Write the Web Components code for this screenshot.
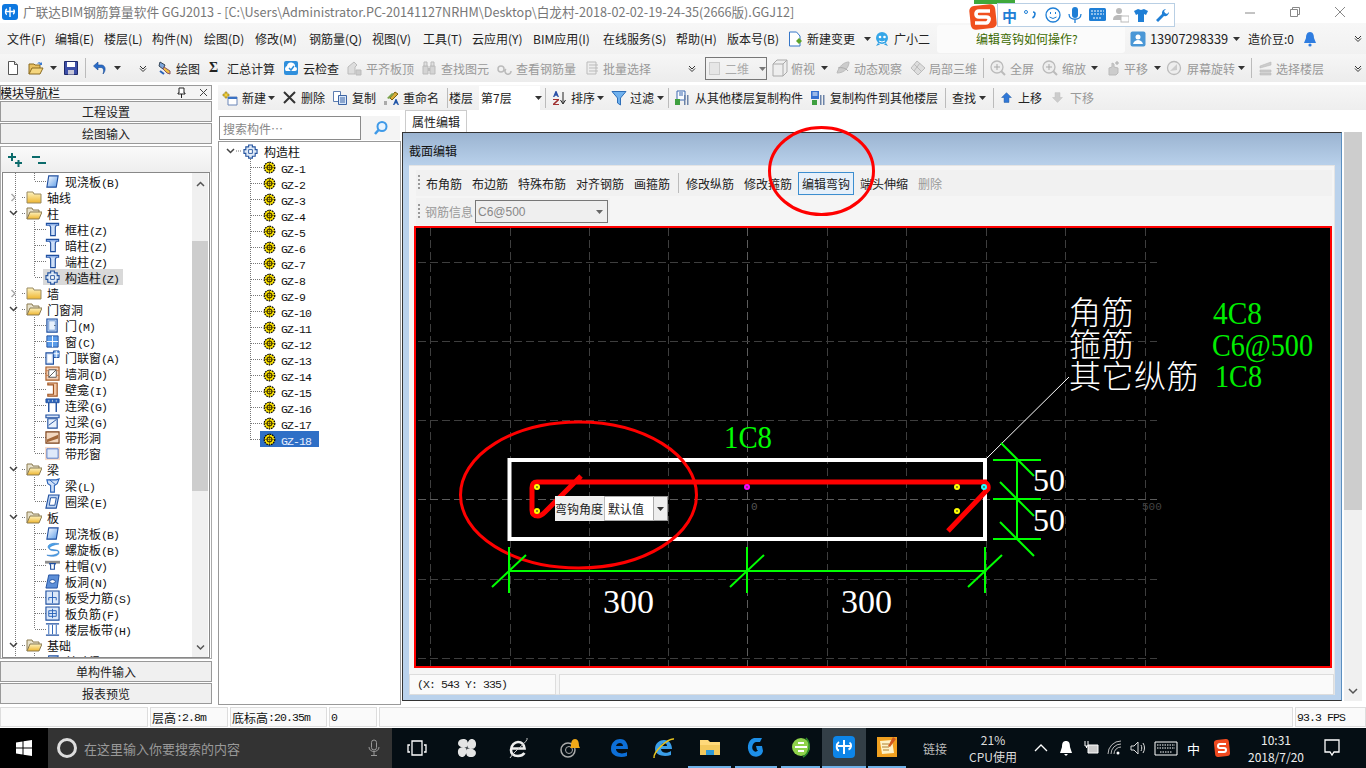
<!DOCTYPE html>
<html lang="zh"><head><meta charset="utf-8"><title>GGJ2013</title>
<style>
html,body{margin:0;padding:0;width:1366px;height:768px;overflow:hidden;background:#fff;font:12px "Noto Sans CJK SC","Noto Sans",sans-serif;color:#111}
gg-app{display:flex;flex-direction:column;width:1366px;height:768px;position:relative}
</style></head><body>
<gg-app>
<gg-titlebar></gg-titlebar>
<gg-strip row="menu" style="height:31px;background:linear-gradient(#f7f7f7,#f1f1f1)"></gg-strip>
<gg-strip row="tools" style="height:28px;background:linear-gradient(#f6f6f6,#ececec)"></gg-strip>
<gg-main></gg-main>
<gg-status></gg-status>
<gg-taskbar></gg-taskbar>
<gg-annot></gg-annot>
<gg-ime></gg-ime>
</gg-app>
<script>
const I={
doc:'<path d="M3.5 1.5h6l3 3v10h-9z" fill="#fff" stroke="#555"/><path d="M9.5 1.5v3h3" fill="#e4e4e4" stroke="#555"/>',
open:'<path d="M1 14V4h5l1 1h5v3" fill="#e8c060" stroke="#8a6a20"/><path d="M1 14l3-6h11l-3 6z" fill="#f5d67e" stroke="#8a6a20"/><path d="M9 4c1-2 3-2 4-1l1-1v3h-3l1-1c-1-.6-2-.4-3 0z" fill="#3a7ad0"/>',
save:'<path d="M1.5 1.5h13v13h-13z" fill="#3d4fa8" stroke="#1f2a6a"/><path d="M4 2h8v5H4z" fill="#fff"/><path d="M5 10h6v4.500H5z" fill="#c8c8d8"/>',
undo:'<path d="M11 14c3-3 3-8-1-9H6V2L1.500 6 6 10V7.500h3c3 0 3 4 2 6.500z" fill="#2a6cc8" stroke="#174a94" stroke-width=".6"/>',
draw:'<path d="M3 2l5 3-2 4-4-3z" fill="#7ea6dc" stroke="#345"/><path d="M7 7l6 4v3l-3-1-4-4z" fill="#f0c040" stroke="#856"/><path d="M3 11l4 3" stroke="#2a62b8" stroke-width="2"/>',
cloud:'<rect x="1" y="1" width="14" height="14" rx="2" fill="#2f8fdc"/><path d="M3 11a3 3 0 0 1 1-5 4 4 0 0 1 8 1 2 2 0 0 1 0 4z" fill="#fff"/><path d="M6 8l2 2 3-4" fill="none" stroke="#2f8fdc" stroke-width="1.500"/>',
gflat:'<path d="M2 14V7l6-5 3 3-2 2v7z" fill="#ddd" stroke="#bbb"/><path d="M10 10h5v5h-5z" fill="#ccc" stroke="#bbb"/>',
gfind:'<path d="M2 6h5v8H2zM9 6h5v8H9z" fill="#d4d4d4" stroke="#bbb"/><path d="M3 2h3v4H3zM10 2h3v4h-3z" fill="#e0e0e0" stroke="#bbb"/><path d="M7 8h2v3H7z" fill="#bbb"/>',
gview:'<path d="M1 9a3 3 0 1 0 6 0 3 3 0 0 0-6 0zM9 9a3 3 0 1 0 5 2" fill="none" stroke="#bbb" stroke-width="1.500"/>',
gbatch:'<path d="M2 2h9v12H2z" fill="#eee" stroke="#bbb"/><path d="M4 5h9M4 8h9M4 11h9" stroke="#bbb"/>',
gbox:'<path d="M3 6l4-4h10v12l-4 4H3z" fill="#eee" stroke="#aaa"/><path d="M3 6h10v12M13 6l4-4" fill="none" stroke="#aaa"/>',
gorbit:'<path d="M2 13C4 6 9 2 14 2c0 5-4 11-12 11z" fill="#ccc" stroke="#bbb"/><path d="M3 8c3-1 8 0 10 3" fill="none" stroke="#aaa"/>',
glocal:'<path d="M7 1l8 7-7 7-7-7z" fill="#ddd" stroke="#bbb"/><path d="M4 4l8 8M10 3l-6 8" stroke="#bbb"/>',
gzoom:'<circle cx="7" cy="7" r="6" fill="#eee" stroke="#bbb" stroke-width="1.300"/><path d="M11 11l4 4" stroke="#bbb" stroke-width="2"/><path d="M4 7h6M7 4v6" stroke="#aaa"/>',
gpan:'<path d="M4 15V8l3-1V3l2 1v3l4 1v5l-2 2z" fill="#ccc" stroke="#bbb"/><path d="M12 1v4M10 3h4" stroke="#aaa"/>',
grot:'<circle cx="8" cy="8" r="6.500" fill="#eee" stroke="#bbb" stroke-width="1.300"/><path d="M4 11l7-7v6z" fill="#ccc"/>',
gfloor:'<path d="M2 6l11-4v3L2 8zM2 10h11v2H2zM2 13h11v2H2z" fill="#ccc" stroke="#bbb" stroke-width=".6"/>',
newp:'<path d="M6 7h9v8H6z" fill="#fff" stroke="#6b86b8"/><path d="M6 7h9v2H6z" fill="#3a72c4"/><path d="M1 4h2V2h2v2h2v2H5v2H3V6H1z" fill="#f3cf3c" stroke="#8a7514" stroke-width=".6"/>',
copy:'<path d="M1.500 1.500h7v10h-7z" fill="#fff" stroke="#5c7db0"/><path d="M6.500 5.500h8v9h-8z" fill="#d8e6f8" stroke="#3c64a4"/><path d="M8 8h5M8 10h5M8 12h5" stroke="#3c64a4"/>',
ren:'<path d="M7 8l5-6 3 2-6 6z" fill="#d9ad3a" stroke="#7a6010"/><path d="M4 8l5-5 2 1-5 5z" fill="#7da34c"/><path d="M1 11h3v4H1z" fill="#aaa"/><path d="M10 15l2.500-6h1L16 15h-1.500l-.5-1.500h-2L11.500 15z" fill="#2256a8"/>',
sort:'<path d="M12 2v11M9.500 10l2.500 4 2.500-4" fill="none" stroke="#222"/><path d="M2 7l2.500-6h1L8 7H6.500l-.4-1.200H3.900L3.500 7z" fill="#2c52a8"/><path d="M2 9h6v1.200L4 14h4v1H2v-1.200L6 10H2z" fill="#a03232"/>',
filter:'<path d="M1 1.500h14L9.500 8v7l-3-2V8z" fill="#6fb1ee" stroke="#2f6fb8"/>',
cf:'<path d="M3 1h8v9H3z" fill="#f8fbff" stroke="#3a68b0"/><path d="M1 9h5v6H1z" fill="#3fa040"/><path d="M10 5h1.500v10H10zM13 5h1.500v10H13z" fill="#6c83a8"/><path d="M5 3h4M5 5h4" stroke="#3a68b0"/>',
cg:'<path d="M1 1h8v8H1z" fill="#3570d0"/><path d="M2.500 3h5M2.500 5h5" stroke="#fff"/><path d="M2 10h5v5H2z" fill="#3fa040"/><path d="M10 5h1.500v10H10zM13 5h1.500v10H13z" fill="#6c83a8"/>',
up:'<path d="M8 2l6 6h-3v6H5V8H2z" fill="#2f78d8" stroke="#1d569c" stroke-width=".6"/>',
gdown:'<path d="M5 2h6v6h3l-6 6-6-6h3z" fill="#ccc" stroke="#bbb" stroke-width=".6"/>',
newchg:'<path d="M2.500 1h7l3.500 4v10h-10.500z" fill="#fff" stroke="#3576c8"/><path d="M9 10l3-3 3 3-3 3z" fill="#5da42a"/>',
xiao:'<circle cx="8" cy="7" r="6" fill="#35a6e8"/><circle cx="6" cy="6" r="1.300" fill="#fff"/><circle cx="10.500" cy="6" r="1.300" fill="#fff"/><path d="M5 10q3 2 6 0" stroke="#fff" fill="none"/><path d="M4 12l-2 3 4-1.500M12 12l2 3-4-1.500" fill="#2f9ce0"/>',
avatar:'<rect x=".5" y=".5" width="15" height="15" rx="2" fill="#4a97d6"/><circle cx="8" cy="6" r="2.500" fill="#fff"/><path d="M3 13c1-3 3-4 5-4s4 1 5 4z" fill="#fff"/>',
bell:'<path d="M8 1c3 0 4 3 4 6l2 5H2l2-5c0-3 1-6 4-6z" fill="#2f7de0"/><circle cx="8" cy="14" r="1.600" fill="#2f7de0"/>',
slab:'<path d="M4 2h10l-2 12H2z" fill="url(#bg)" stroke="#1f4f9f" stroke-width="1.200"/>',
col:'<path d="M1.500 1.500h13v2h-2.500l-1 2v9H6v-9l-1-2H1.500z" fill="#cfe0f8" stroke="#1f4f9f" stroke-width="1.200"/><path d="M2 3h12" stroke="#6f9be0"/>',
gz:'<path d="M6 1h4v2h3v3h2v4h-2v3h-3v2H6v-2H3v-3H1V6h2V3h3z" fill="#dfeaf8" stroke="#27559f" stroke-width="1.200"/><path d="M6 6h4v4H6z" fill="#fff" stroke="#27559f"/>',
door:'<path d="M2 1h11v14H2z" fill="#bcd4f4" stroke="#1f4f9f" stroke-width="1.200"/><path d="M4 3h7v10H4z" fill="#e8f1fc" stroke="#7aa0d8"/><path d="M10 8h1" stroke="#123"/>',
win:'<path d="M2 2h12v12H2z" fill="#5b9be8" stroke="#1f4f9f"/><path d="M8 2v12M2 8h12" stroke="#fff"/>',
dw:'<path d="M1 3h8v12H1z" fill="#d6e4f8" stroke="#1f4f9f" stroke-width="1.200"/><path d="M3 5h4v8H3z" fill="#fff"/><path d="M9 1h6v7H9z" fill="#7db0ee" stroke="#1f4f9f"/><path d="M12 1v7M9 4h6" stroke="#fff"/>',
hole:'<path d="M1 1h14v14H1z" fill="#f3cdb2" stroke="#a65b25" stroke-width="1.200"/><path d="M4 4h8v8H4z" fill="#fff" stroke="#555"/><path d="M4 12l8-8" stroke="#555"/><path d="M1 5h3M1 10h3M12 5h3M12 10h3" stroke="#c97e4a"/>',
niche:'<path d="M3 1h10v14H3v-2h6V3H3z" fill="#f3c8a6" stroke="#a0531f" stroke-width="1.200"/>',
link:'<path d="M1 1h14v4H1z" fill="#2f66bc" stroke="#1f4f9f"/><path d="M4 5v10M12 5v10" stroke="#1f4f9f" stroke-width="1.500"/><path d="M4 2v2M8 2v2M12 2v2" stroke="#bcd"/>',
lintel:'<path d="M1 1h14v3H1z" fill="#d6e4f8" stroke="#1f4f9f" stroke-width="1.200"/><path d="M3 5h10v10H3z" fill="#e8f1fc" stroke="#1f4f9f" stroke-width="1.200"/><path d="M4 12l8-6" stroke="#1f4f9f"/>',
band:'<path d="M1 2h14v12H1z" fill="#f3d8c0" stroke="#7a3e14" stroke-width="1.200"/><path d="M2 10L14 5v4L2 13z" fill="#a3683a"/>',
bwin:'<path d="M0 1h16v14H0z" fill="#f8dccc"/><path d="M2 3h12v10H2z" fill="#dfe9fa" stroke="#4f78c8"/>',
beam:'<path d="M2 2h10l3-1-2 5-3 2v7H6V8L3 6z" fill="#cfe0f8" stroke="#2a62b8" stroke-width="1.200"/><path d="M5 2l6 5" stroke="#2a62b8"/>',
ring:'<path d="M4 1h11l-3 14H1z" fill="#bcd4f4" stroke="#1f4f9f" stroke-width="1.200"/><path d="M6 4h6l-1.500 8H4.500z" fill="#fff" stroke="#1f4f9f"/>',
spiral:'<path d="M15 2C8 0 1 3 4 7s8 1 10 3-5 5-12 4c4 2 13 2 13-3 0-4-9-2-10-4s4-4 10-5z" fill="#4ca3ea" stroke="#2a78c8" stroke-width=".6"/>',
cap:'<path d="M0 3h16v3H0z" fill="#8e8e8e"/><path d="M5 6h6l-1 2v4H6V8z" fill="#fff" stroke="#1f4f9f" stroke-width="1.200"/>',
shole:'<path d="M4 1h11l-2 14H1z" fill="#5d8fd8" stroke="#1f4f9f"/><ellipse cx="8" cy="8" rx="3" ry="2" fill="#fff" stroke="#1f4f9f"/>',
sbar:'<path d="M1 1h14v14H1z" fill="#dbe8f9" stroke="#1f4f9f" stroke-width="1.200"/><path d="M8 2v12M4 8h8M4 8v3M12 8v3" stroke="#2a62b8"/>',
nbar:'<path d="M1 1h14v14H1z" fill="#dbe8f9" stroke="#1f4f9f" stroke-width="1.200"/><path d="M4 5h8v6H4zM8 3v10M4 8h8" fill="none" stroke="#2a62b8"/>',
fbar:'<path d="M1 2h14M1 14h14" stroke="#1f4f9f" stroke-width="1.500"/><path d="M4 3v10M8 3v10M12 3v10" stroke="#2a62b8"/>',
fold:'<path d="M1 5V3h6l1 2h7v9H1z" fill="url(#fg)" stroke="#9a8a60"/>',
foldo:'<path d="M1 14V3h5l1 2h6v2" fill="#e8e2cc" stroke="#8a7a50"/><path d="M1 14l3-7h12l-3 7z" fill="url(#fg)" stroke="#8a7a50"/>',
gear:'<circle cx="8" cy="8" r="6.500" fill="#ffe600" stroke="#000" stroke-width="1.500" stroke-dasharray="2 1"/><circle cx="8" cy="8" r="3" fill="none" stroke="#4a3a00" stroke-width="1.500"/><path d="M8 1v14M1 8h14" stroke="#3a3000" stroke-width=".7"/>',
search:'<circle cx="9" cy="6.500" r="4.500" fill="#e8f4ff" stroke="#3f9ae8" stroke-width="2"/><path d="M5.500 10L2 14" stroke="#3f9ae8" stroke-width="2.500"/>',
plusm:'<path d="M1 5h8M5 1v8M8 11h7M11.500 8v7" stroke="#0b6b6b" stroke-width="2"/>',
};
const DEFS='<defs><linearGradient id="bg" x1="0" y1="0" x2="1" y2="1"><stop offset="0" stop-color="#fff"/><stop offset="1" stop-color="#5b9be8"/></linearGradient><linearGradient id="fg" x1="0" y1="0" x2="0" y2="1"><stop offset="0" stop-color="#fdf3c0"/><stop offset="1" stop-color="#eeb52f"/></linearGradient></defs>';
class UiIcon extends HTMLElement{connectedCallback(){const s=+(this.getAttribute('s')||16);const r=this.shadowRoot||this.attachShadow({mode:'open'});
r.innerHTML=`<style>:host{display:inline-flex;flex:none;width:${s}px;height:${s}px}svg{display:block}</style><svg width="${s}" height="${s}" viewBox="0 0 ${this.getAttribute('n')=='gbox'?'20 20':'16 16'}">${DEFS}${I[this.getAttribute('n')]||''}</svg>`}}
customElements.define('ui-icon',UiIcon);
const ARW='<svg width="7" height="4" viewBox="0 0 7 4"><path d="M0 0h7L3.500 4z" fill="#333"/></svg>';
const CHV='<svg width="9" height="9" viewBox="0 0 9 9"><path d="M1 2l3 3 3-3M1 4.500l3 3 3-3" fill="none" stroke="#333"/></svg>';
const T=(x,s,f)=>[x,[...s].reduce((a,c)=>a+(c.charCodeAt(0)>255?12:7),0),'t',s,f];
const ROWS={
menu:{start:0,items:[T(7,'文件(F)'),T(55,'编辑(E)'),T(104,'楼层(L)'),T(152,'构件(N)'),T(204,'绘图(D)'),T(255,'修改(M)'),T(309,'钢筋量(Q)'),T(372,'视图(V)'),T(423,'工具(T)'),T(472,'云应用(Y)'),T(533,'BIM应用(I)'),T(603,'在线服务(S)'),T(676,'帮助(H)'),T(727,'版本号(B)'),
[787,16,'i','newchg'],T(807,'新建变更'),[864,7,'a'],[874,16,'i','xiao'],T(894,'广小二'),
[937,188,'h','<div style="height:28px;background:#fbfbfb;border-radius:3px;display:flex;align-items:center;padding-left:39px;color:#3c6a00;box-sizing:border-box;width:188px;font-size:12px">编辑弯钩如何操作?</div>'],
[1130,16,'i','avatar'],[1150,78,'h','<span style="font-size:12.800px">13907298339</span>'],[1233,7,'a'],T(1248,'造价豆:0'),[1302,16,'i','bell'],[1354,9,'c']]},
tools:{start:0,items:[[5,16,'i','doc'],[28,18,'i','open'],[50,7,'a'],[63,16,'i','save'],[85,1,'s'],[92,16,'i','undo'],[114,7,'a'],[139,9,'c'],
[157,16,'i','draw'],T(176,'绘图'),[209,12,'h','<b style="font:bold 14px Liberation Serif">Σ</b>'],T(227,'汇总计算'),[283,16,'i','cloud'],T(303,'云检查'),
[346,16,'i','gflat'],T(366,'平齐板顶',1),[421,16,'i','gfind'],T(441,'查找图元',1),[497,16,'i','gview'],T(516,'查看钢筋量',1),[585,16,'i','gbatch'],T(603,'批量选择',1),[688,9,'c'],
[705,62,'h','<div style="box-sizing:border-box;width:62px;height:23px;border:1px solid #777;display:flex;align-items:center;color:#aaa;padding-left:3px;gap:5px"><span style="width:14px;height:13px;background:#e6e6e6;border:1px solid #ccc;box-sizing:border-box"></span>二维<span style="margin-left:5px;line-height:0">'+ARW.replace('#333','#777')+'</span></div>'],
[770,20,'h','<ui-icon n="gbox" s="20"></ui-icon>'],T(791,'俯视',1),[821,7,'a'],[835,16,'i','gorbit'],T(854,'动态观察',1),[910,16,'i','glocal'],T(929,'局部三维',1),[983,1,'s'],
[990,16,'i','gzoom'],T(1010,'全屏',1),[1042,16,'i','gzoom'],T(1062,'缩放',1),[1091,7,'a'],[1105,16,'i','gpan'],T(1124,'平移',1),[1154,7,'a'],[1166,16,'i','grot'],T(1187,'屏幕旋转',1),[1238,7,'a'],[1251,1,'s'],[1258,16,'i','gfloor'],T(1276,'选择楼层',1),[1354,9,'c']]},
row3:{start:218,items:[[222,16,'i','newp'],T(242,'新建'),[268,7,'a'],[283,13,'h','<svg width="13" height="13" viewBox="0 0 13 13"><path d="M1 1l11 11M12 1L1 12" stroke="#333" stroke-width="2"/></svg>'],T(301,'删除'),[332,16,'i','copy'],T(352,'复制'),[383,16,'i','ren'],T(403,'重命名'),[447,1,'s'],T(449,'楼层'),
[479,61,'h','<div style="width:61px;height:24px;background:#fff;display:flex;align-items:center;padding-left:2px;box-sizing:border-box;gap:23px">第7层<span style="line-height:0">'+ARW+'</span></div>'],[545,1,'s'],[551,16,'i','sort'],T(571,'排序'),[597,7,'a'],[611,16,'i','filter'],T(630,'过滤'),[657,7,'a'],[668,1,'s'],[674,16,'i','cf'],T(695,'从其他楼层复制构件'),[810,16,'i','cg'],T(830,'复制构件到其他楼层'),[945,1,'s'],T(952,'查找'),[979,7,'a'],[993,1,'s'],[1000,14,'h','<ui-icon n="up" s="13"></ui-icon>'],T(1018,'上移'),[1051,14,'h','<ui-icon n="gdown" s="13"></ui-icon>'],T(1070,'下移',1)]},
sec1:{start:416,items:[[418,3,'g'],T(426,'布角筋'),T(472,'布边筋'),T(518,'特殊布筋'),T(576,'对齐钢筋'),T(634,'画箍筋'),[678,1,'s'],T(686,'修改纵筋'),T(744,'修改箍筋'),
[798,56,'h','<div style="box-sizing:border-box;width:56px;height:23px;border:1px solid #3c8ed0;background:#e6f0fa;display:flex;align-items:center;justify-content:center">编辑弯钩</div>'],T(860,'端头伸缩'),T(918,'删除',1)]},
sec2:{start:416,items:[[418,3,'g'],T(425,'钢筋信息',1),[475,133,'h','<div style="box-sizing:border-box;width:133px;height:23px;border:1px solid #777;background:#efefef;color:#888;display:flex;align-items:center;padding-left:2px;justify-content:space-between;padding-right:4px;font-family:Liberation Sans">C6@500<span style="line-height:0">'+ARW.replace('#333','#666')+'</span></div>']]}
};
class GgStrip extends HTMLElement{connectedCallback(){const d=ROWS[this.getAttribute('row')];const r=this.attachShadow({mode:'open'});
let c=d.start,h='';for(const [x,w,k,v,f] of d.items){const m=x-c;c=x+w;let body='';
if(k=='t')body=`<span class="${f?'dis':''}">${v}</span>`;else if(k=='i')body=`<ui-icon n="${v}"></ui-icon>`;else if(k=='a')body=ARW;else if(k=='c')body=CHV;else if(k=='s')body='<i class="sep"></i>';else if(k=='g')body='<i class="grip"></i>';else body=v;
h+=`<div class="it" style="margin-left:${m}px;width:${w}px">${body}</div>`}
r.innerHTML=`<style>:host{display:flex;align-items:center;flex:none;font:12px "Noto Sans CJK SC",sans-serif;color:#222;white-space:nowrap}
.it{flex:none;display:flex;align-items:center;height:100%}.dis{color:#999}.sep{display:block;width:1px;height:20px;background:#bbb}.grip{display:block;width:2px;height:16px;background:repeating-linear-gradient(#999 0 2px,transparent 2px 4px)}</style>${h}`}}
customElements.define('gg-strip',GgStrip);
const LOGO='<rect width="16" height="16" rx="3" fill="#0d78e0"/><path d="M8 3v10M4 7.500h8.500M5 5c-2 1-2 5 0 5.500M11.500 5.500c1.500 1 1 4-.5 4.500" stroke="#fff" stroke-width="1.400" fill="none"/>';
class GgTitlebar extends HTMLElement{connectedCallback(){this.attachShadow({mode:'open'}).innerHTML=`<style>:host{display:flex;flex:none;height:23px;background:#fff;align-items:center;color:#777;font:12.650px "Noto Sans CJK SC",sans-serif;white-space:nowrap}
.lg{flex:none;width:16px;height:16px;margin:0 5px 0 2px;display:block}.c{margin-left:auto;display:flex;align-items:center}.c svg{display:block}</style>
<svg class="lg" viewBox="0 0 16 16">${LOGO}</svg><span>广联达BIM钢筋算量软件 GGJ2013 - [C:\\Users\\Administrator.PC-20141127NRHM\\Desktop\\白龙村-2018-02-02-19-24-35(2666版).GGJ12]</span>
<div class="c"><svg width="12" height="12" style="margin-right:33px"><path d="M1 7h10" stroke="#888"/></svg><svg width="12" height="12" style="margin-right:33px"><path d="M1.500 3.500h7v7h-7zM3.500 3V1.500h7v7H9" fill="none" stroke="#888"/></svg><svg width="12" height="12" style="margin-right:20px"><path d="M1 1l10 10M11 1L1 11" stroke="#888"/></svg></div>`}}
customElements.define('gg-titlebar',GgTitlebar);
class GgMain extends HTMLElement{connectedCallback(){this.attachShadow({mode:'open'}).innerHTML=`<style>:host{display:flex;flex:none;height:625px;background:#fff;padding-top:3px;box-sizing:border-box}
.r{flex:none;width:1148px;margin-left:6px;display:flex;flex-direction:column}.b{display:flex;height:595px}
gg-strip{height:25px;background:linear-gradient(#f6f6f6,#eeeeee)}</style>
<gg-side></gg-side><div class="r"><gg-strip row="row3"></gg-strip><div class="b"><gg-list></gg-list><gg-editor></gg-editor></div></div>`}}
customElements.define('gg-main',GgMain);
const mono=s=>s.replace(/[\x20-\x7e]+/g,m=>`<span class="l">${m}</span>`);
const TREE_CSS=`.l{font:11.500px "Liberation Mono",monospace;letter-spacing:-.9px;display:inline-block;width:auto}
.row{display:flex;align-items:center;height:16px;white-space:nowrap;font:12px "Noto Sans CJK SC",sans-serif;color:#111;background-repeat:no-repeat;position:relative}`;
const dotV=`repeating-linear-gradient(#777 0 1px,transparent 1px 2px)`,dotH=`repeating-linear-gradient(90deg,#777 0 1px,transparent 1px 2px)`;
class GgSide extends HTMLElement{connectedCallback(){
const rows=[[2,'slab','现浇板(B)','e'],[1,'fold','轴线','c'],[1,'foldo','柱','o'],[2,'col','框柱(Z)'],[2,'col','暗柱(Z)'],[2,'col','端柱(Z)'],[2,'gz','构造柱(Z)','se'],[1,'fold','墙','c'],[1,'foldo','门窗洞','o'],[2,'door','门(M)'],[2,'win','窗(C)'],[2,'dw','门联窗(A)'],[2,'hole','墙洞(D)'],[2,'niche','壁龛(I)'],[2,'link','连梁(G)'],[2,'lintel','过梁(G)'],[2,'band','带形洞'],[2,'bwin','带形窗','e'],[1,'foldo','梁','o'],[2,'beam','梁(L)'],[2,'ring','圈梁(E)','e'],[1,'foldo','板','o'],[2,'slab','现浇板(B)'],[2,'spiral','螺旋板(B)'],[2,'cap','柱帽(V)'],[2,'shole','板洞(N)'],[2,'sbar','板受力筋(S)'],[2,'nbar','板负筋(F)'],[2,'fbar','楼层板带(H)','e'],[1,'foldo','基础','o'],[2,'slab','基础梁(F)']];
let h='';for(const [l,ic,t,f] of rows){
 const last=f&&f.includes('e'),sel=f=='se';
 const bg=[`${dotV} 12px 0/1px 16px no-repeat`];
 if(l==2){bg.push(`${dotV} 31px 0/1px ${last?8:16}px no-repeat`,`${dotH} 32px 8px/11px 1px no-repeat`);}
 else bg.push(`${dotH} 19px 8px/4px 1px no-repeat`);
 const ar=l==1?(f=='o'?'<svg width="9" height="6" viewBox="0 0 9 6"><path d="M1 1l3.500 3.500L8 1" fill="none" stroke="#444" stroke-width="1.500"/></svg>':'<svg width="9" height="9" viewBox="0 0 9 9"><path d="M2.500 1l3.500 3.500L2.500 8" fill="none" stroke="#aaa" stroke-width="1.500"/></svg>'):'';
 h+=l==1?`<div class="row" style="background:${bg.join(',')}"><span class="as">${ar}</span><ui-icon n="${ic}"></ui-icon><span class="t1">${mono(t)}</span></div>`
 :`<div class="row l2" style="background:${bg.join(',')}"><span class="${sel?'sel':'wr'}"><ui-icon n="${ic}" s="15"></ui-icon><span class="t2">${mono(t)}</span></span></div>`}
this.attachShadow({mode:'open'}).innerHTML=`<style>:host{display:flex;flex-direction:column;flex:none;width:212px;height:619px;font:12px "Noto Sans CJK SC",sans-serif;color:#111}${TREE_CSS}
.hd{height:15px;border:1px solid #999;box-sizing:border-box;display:flex;align-items:center;overflow:hidden;background:#f4f4f4;padding-right:3px}.hd svg{flex:none}
.btn{flex:none;height:21px;box-sizing:border-box;border:1px solid #999;background:#f0f0f0;display:flex;align-items:center;justify-content:center;color:#222}
.pn{flex:1;margin:2px 0;border:1px solid #aaa;box-sizing:border-box;display:flex;flex-direction:column;min-height:0;background:#fff}
.ic{height:25px;background:linear-gradient(#fafafa,#eee);display:flex;align-items:center;padding-left:6px;flex:none}
.tw{flex:1;min-height:0;display:flex;border:1px solid #888;margin:0 1px;overflow:hidden}
.tr{flex:1;overflow:hidden}
.as{width:23px;flex:none;display:flex;align-items:center;padding-left:6px;box-sizing:border-box}.t1{margin-left:5px}
.l2{padding-left:42px}.wr,.sel{display:flex;align-items:center;height:16px}.sel{background:#d9d9d9;margin-left:-2px;padding-left:2px;padding-right:4px}.t2{margin-left:5px}
.sb{flex:none;width:16px;margin-right:1px;background:#f0f0f0;display:flex;flex-direction:column;align-items:center}.sb svg{flex:none}.up{height:16px;margin-top:3px}.th{flex:none;align-self:stretch;background:#cdcdcd;height:250px;margin-top:49px}.dn{margin-top:auto;margin-bottom:6px}
</style>
<div class="hd"><span style="margin-left:-1px">模块导航栏</span><svg style="margin-left:auto;margin-right:13px" width="9" height="11" viewBox="0 0 9 11"><path d="M2 1h5v5h1v1H1V6h1zM4.500 7v4" fill="#fff" stroke="#222"/></svg><svg width="9" height="9"><path d="M1 1l7 7M8 1L1 8" stroke="#444"/></svg></div>
<div class="btn" style="margin-top:1px">工程设置</div><div class="btn" style="margin-top:1px">绘图输入</div>
<div class="pn"><div class="ic"><ui-icon n="plusm"></ui-icon><svg width="18" height="16" viewBox="0 0 18 16" style="margin-left:7px"><path d="M2 5h8M8 11h8" stroke="#0b6b6b" stroke-width="2"/></svg></div>
<div class="tw"><div class="tr">${h}</div><div class="sb"><svg class="up" width="9" height="7" viewBox="0 0 9 7"><path d="M1 5.500L4.500 2 8 5.500" fill="none" stroke="#555" stroke-width="1.500"/></svg><div class="th"></div><svg class="dn" width="9" height="7" viewBox="0 0 9 7"><path d="M1 1.500L4.500 5 8 1.500" fill="none" stroke="#555" stroke-width="1.500"/></svg></div></div></div>
<div class="btn">单构件输入</div><div class="btn" style="margin-top:1px">报表预览</div>`}}
customElements.define('gg-side',GgSide);
class GgList extends HTMLElement{connectedCallback(){let h='';for(let i=1;i<=18;i++){const s=i==18;
h+=`<div class="row it" style="background:${dotV} 31px 0/1px ${s?9:16}px no-repeat,${dotH} 32px 8px/12px 1px no-repeat"><span class="${s?'sel':'wr'}"><ui-icon n="gear" s="13"></ui-icon><span class="tx">${mono('GZ-'+i)}</span></span></div>`}
this.attachShadow({mode:'open'}).innerHTML=`<style>:host{display:flex;flex-direction:column;flex:none;width:184px;height:595px;font:12px "Noto Sans CJK SC",sans-serif}${TREE_CSS}
.s{height:31px;flex:none;display:flex;padding-top:6px;box-sizing:border-box;align-items:flex-start}.in{width:142px;margin-left:1px;border:1px solid #8a8a8a;box-sizing:border-box;color:#888;display:flex;align-items:center;padding-left:3px;background:#fff;height:24px}.go{flex:1;display:flex;align-items:center;justify-content:center;background:#f4f4f4;height:24px;margin-right:2px}
.t{flex:1;border:1px solid #999;margin-right:1px;box-sizing:border-box;background:#fff;overflow:hidden;padding-top:1px}
.rt{background:${dotV} 31px 10px/1px 6px no-repeat;padding-left:7px}.it{padding-left:44px}.wr,.sel{display:flex;align-items:center;height:16px}.tx{margin-left:5px}.sel{margin-left:-3px;padding:0 8px 0 3px;background:#2f6fc6}.sel .l{color:#e8f0ff}
.n{margin-left:6px}</style>
<div class="s"><div class="in">搜索构件…</div><div class="go"><ui-icon n="search"></ui-icon></div></div>
<div class="t"><div class="row rt"><svg width="9" height="6" viewBox="0 0 9 6"><path d="M1 1l3.500 3.500L8 1" fill="none" stroke="#444" stroke-width="1.500"/></svg><svg width="8" height="2"><path d="M1 1h6" stroke="#777" stroke-dasharray="1 1"/></svg><ui-icon n="gz" s="15"></ui-icon><span class="n">构造柱</span></div>${h}</div>`}}
customElements.define('gg-list',GgList);
class GgEditor extends HTMLElement{connectedCallback(){this.attachShadow({mode:'open'}).innerHTML=`<style>:host{display:flex;flex-direction:column;flex:none;width:964px;font:12px "Noto Sans CJK SC",sans-serif;color:#222}
.tabs{height:22px;flex:none;display:flex;padding-left:3px;box-sizing:border-box}.tab{width:62px;height:22px;box-sizing:border-box;border:1px solid #ccc;border-bottom:0;display:flex;align-items:center;justify-content:center}
.m{display:flex;height:569px;flex:none}.win{width:940px;flex:none;box-sizing:border-box;border:1px solid #333;border-right-color:#5b8fc0;background:linear-gradient(#9bb4d1,#bad2ec 34px,#bad2ec);padding:0 6px 5px}
.tt{height:32px;display:flex;align-items:center;padding-top:2px;box-sizing:border-box;color:#111}
.bd{background:#f5f5f5;height:530px;box-sizing:border-box;padding:4px 0 0 5px;border:1px solid #e4e4e4;border-left:0}
.r1{height:26px;width:916px;background:#f1f1f1;margin-left:2px}.r1 gg-strip,.r2 gg-strip{height:100%}.r2{height:27px;margin:2px 0 0 2px;width:194px;background:#f1f1f1}
gg-canvas{margin-top:1px}
.st{height:21px;margin:6px 0 0 -5px;display:flex;gap:3px;width:925px}.st div{border:1px solid #ddd;box-sizing:border-box;background:#fafafa}.st .a{width:147px;display:flex;align-items:center;padding-left:7px;white-space:pre;font:11.500px "Liberation Mono",monospace;letter-spacing:-.9px}.st .b{flex:1}
.sc{flex:none;width:18px;margin-left:2px;background:#f0f0f0;display:flex;flex-direction:column;align-items:center}.th{align-self:stretch;height:378px;background:#cdcdcd}.dn{margin-top:auto;margin-bottom:6px}
</style><div class="tabs"><div class="tab">属性编辑</div></div>
<div class="m"><div class="win"><div class="tt">截面编辑</div><div class="bd"><div class="r1"><gg-strip row="sec1"></gg-strip></div><div class="r2"><gg-strip row="sec2"></gg-strip></div><gg-canvas></gg-canvas><div class="st"><div class="a">(X: 543 Y: 335)</div><div class="b"></div></div></div></div>
<div class="sc"><div class="th"></div><svg class="dn" width="10" height="8" viewBox="0 0 10 8"><path d="M1 2l4 4 4-4" fill="none" stroke="#555" stroke-width="1.500"/></svg></div></div>`}}
customElements.define('gg-editor',GgEditor);
class GgCanvas extends HTMLElement{connectedCallback(){
let g='';const V=[430,510,589,668,747,827,906,986,1065,1145],H=[262,341,420,499,579,658];
for(const x of V)g+=`<path d="M${x+.5} 228V666" stroke="${x==747?'#5c5c5c':'#3e3e3e'}" stroke-dasharray="8 4"/>`;
for(const y of H)g+=`<path d="M418 ${y+.5}H1157" stroke="${y==499?'#5c5c5c':'#3e3e3e'}" stroke-dasharray="8 4"/>`;
const dot=(x,y,c)=>`<circle cx="${x}" cy="${y}" r="3" fill="${c}"/><circle cx="${x}" cy="${y}" r=".9" fill="#553"/>`;
const t=(x,y,s,c,len,fs)=>`<text x="${x}" y="${y}" fill="${c}" font-size="${fs||32}" font-family="Liberation Serif,serif"${len?` textLength="${len}" lengthAdjust="spacingAndGlyphs"`:''}>${s}</text>`;
const c=(x,y,s)=>`<text x="${x}" y="${y}" fill="#fff" font-size="32" font-weight="300" letter-spacing=".5" font-family="Noto Sans CJK SC,sans-serif">${s}</text>`;
this.attachShadow({mode:'open'}).innerHTML=`<style>:host{display:block;width:918px;height:442px;box-sizing:border-box;border:2px solid #f00;background:#000;position:relative;font:12px "Noto Sans CJK SC",sans-serif}svg{display:block}
.p{position:absolute;left:139px;top:268px;width:113px;height:25px;display:flex;background:#f0f0f0;color:#222}.a{width:49px;flex:none;display:flex;align-items:center;white-space:nowrap}.b{width:50px;flex:none;background:#fff;border:1px solid #aaa;border-left:1px solid #bbb;box-sizing:border-box;display:flex;align-items:center;padding-left:3px;white-space:nowrap}.c{flex:1;background:#eee;border:1px solid #999;border-left:0;display:flex;align-items:center;justify-content:center}</style>
<svg width="914" height="438" viewBox="416 228 914 438">${g}
<rect x="509.500" y="460" width="475.500" height="79" fill="none" stroke="#fff" stroke-width="4"/>
<path d="M987 482H537Q532 482 532 488V510Q532 516 538 516Q541 516 545 512L581 476" fill="none" stroke="#f00" stroke-width="5"/>
<path d="M984 482Q989 484 988 489L948 531" fill="none" stroke="#f00" stroke-width="5"/>
${dot(537,487,'#ff0')}${dot(537,511,'#ff0')}${dot(957,487,'#ff0')}${dot(957,511,'#ff0')}${dot(984,487,'#2ff')}${dot(747,487,'#f0f')}
<ellipse cx="578.500" cy="495" rx="118" ry="73" fill="none" stroke="#f00" stroke-width="3"/>
<path d="M987 458L1069 377" stroke="#fff"/>
<g stroke="#0f0" stroke-width="2" fill="none"><path d="M509 571H985M509 547V593M492 587L526 555M747 547V593M730 587L764 555M985 547V593M968 587L1002 555"/><path d="M1017 460V539M993 460H1041M993 499H1041M993 539H1041M1001 443L1034 476M1000 482L1034 516M1000 522L1034 556"/></g>
${t(1033,491,'50','#fff')}${t(1033,531,'50','#fff')}${t(603,613,'300','#fff',51,34)}${t(841,613,'300','#fff',51,34)}${t(724,448,'1C8','#0f0',48)}
${c(1069,324,'角筋')}${c(1069,356,'箍筋')}${c(1069,388,'其它纵筋')}
${t(1213,324,'4C8','#0e0',49)}${t(1212,356,'C6@500','#0e0',101)}${t(1215,387,'1C8','#0e0',47)}
<text x="751" y="510" fill="#555" font-size="11" font-family="Liberation Mono">0</text><text x="1142" y="510" fill="#444" font-size="11" font-family="Liberation Mono">500</text>
</svg><div class="p"><div class="a">弯钩角度</div><div class="b">默认值</div><div class="c">${ARW}</div></div>`}}
customElements.define('gg-canvas',GgCanvas);
class GgStatus extends HTMLElement{connectedCallback(){this.attachShadow({mode:'open'}).innerHTML=`<style>:host{display:flex;flex:none;height:21px;background:#fff;gap:2px;font:12px "Noto Sans CJK SC",sans-serif;color:#111;white-space:nowrap}${TREE_CSS}
div{border:1px solid #ddd;box-sizing:border-box;background:#fafafa;display:flex;align-items:center;padding-left:1px;height:20px}</style>
<div style="width:148px"></div><div style="width:78px">${mono('层高:2.8m')}</div><div style="width:97px">${mono('底标高:20.35m')}</div><div style="width:48px">${mono('0')}</div><div style="width:914px"></div><div style="width:71px">${mono('93.3 FPS')}</div>`}}
customElements.define('gg-status',GgStatus);
class GgTaskbar extends HTMLElement{connectedCallback(){
const S=[
[49,'<path d="M5 9H3v7h2M19 9h2v7h-2M7 5h10v14H7z" fill="none" stroke="#fff" stroke-width="1.300"/>',0],
[51,'<g transform="translate(1.500 1.500) scale(.875)"><path d="M11.500 11.500C3 12 1 8 2 5s5-4 8-3 4 5 1.500 9.500zM12.500 11.500C12 3 16 1 19 2s4 5 3 8-5 4-9.500 1.500zM12.500 12.500C21 12 23 16 22 19s-5 4-8 3-4-5-1.500-9.500zM11.500 12.500C12 21 8 23 5 22s-4-5-3-8 5-4 9.500-1.500z" fill="#e4e4e4"/></g>',0],
[52,'<path d="M6 12.500h12.500C18 8 15 6 12 6s-7 3-7 8 4 6 7 6 5-1 6.500-3" fill="none" stroke="#eee" stroke-width="2.600"/><path d="M21 2C23 5 9 14 4 22" stroke="#ccc" fill="none"/>',0],
[51,'<circle cx="10" cy="14" r="7" fill="none" stroke="#aaa" stroke-width="1.500"/><circle cx="11" cy="14" r="3.500" fill="none" stroke="#aaa"/><path d="M13 10c0-4 1-7 4-7s4 3 4 7l1 2H12z" fill="#f0a818"/>',0],
[47,'<path d="M4 13C4 6 9 3 13 3c6 0 8 5 8 10H9c0 4 6 6 11 3v4c-6 2-16 1-16-7zM9 10h7c0-4-6-4-7 0z" fill="#0d6fd8"/>',0],
[44,'<path d="M3 13C3 7 8 4 12 4c6 0 8 5 8 9H9c0 4 6 5 10 2v4c-6 2-16 1-16-6zM9 10h6c0-4-5-4-6 0z" fill="#3a9ee8"/><path d="M2 22c-1-6 14-20 20-19" fill="none" stroke="#e8c420" stroke-width="1.500"/>',0],
[47,'<path d="M2 5h8l2 2h10v13H2z" fill="#ffd97a"/><path d="M2 10h20v10H2z" fill="#f4c95d"/><path d="M8 15h8v5H8z" fill="#2f9ad8"/>',0],
[46,'<path d="M18 3H10C3 5 2 15 7 20c4 3 11 2 12-4l-1-5h-6l1 4h1c-1 2-3 2-4 1-3-2-2-8 2-9h4z" fill="#1d8fe8"/>',0],
[43,'<circle cx="12" cy="12" r="9" fill="#8fd24a"/><path d="M6 12h12M9 8h6M9 16h6" stroke="#fff" stroke-width="2"/><path d="M17 3c5 5 4 15-3 19" fill="none" stroke="#2a8a2a" stroke-width="1.500"/>',0],
[44,'<rect x="1" y="1" width="22" height="22" rx="4" fill="#0d85e8"/><path d="M12 5v14M6 11h13M7 7c-3 2-3 8 0 8.500M17.500 7.500c2.500 1.500 2 6-1 7" fill="none" stroke="#fff" stroke-width="2"/>',1],
[42,'<path d="M2 2h20v20H2z" fill="#f0a020"/><path d="M5 6l12-1 2 13-12 1z" fill="#fdf2c8"/><path d="M7 9h7M7 12h7M8 15h6" stroke="#b08030"/><path d="M18 2l3 2-6 8-2-1z" fill="#d05a20"/>',0]];
const under={6:1,7:1,8:1,9:1,10:1};
let apps='';S.forEach(([w,p,a],i)=>{apps+=`<div class="ap ${a?'ac':''} ${under[i]?'u':''}" style="width:${w}px"><svg width="24" height="24" viewBox="0 0 24 24">${p}</svg></div>`});
const tr=[[24,'<path d="M1 9l6-6 6 6" fill="none" stroke="#fff" stroke-width="1.300"/>',14,12],[25,'<path d="M8 1c3 0 4 2 4 6l2 6H2l2-6c0-4 1-6 4-6zM6 14h4l-2 2z" fill="#fff"/>',16,16],[25,'<path d="M2 1v5h3V1M3.500 6v2" stroke="#fff" fill="none"/><path d="M5 5h10v8H5z" fill="#ccc" stroke="#fff"/>',16,16],[23,'<path d="M1 14a13 13 0 0 1 13-13M4 14a10 10 0 0 1 10-10M7 14a7 7 0 0 1 7-7" fill="none" stroke="#bbb"/><circle cx="11" cy="13" r="1.500" fill="#fff"/>',16,16],[23,'<path d="M1 6h3l4-4v12l-4-4H1zM11 5c1 2 1 4 0 6M13 3c2 3 2 7 0 10" fill="none" stroke="#ddd"/>',16,16],[34,'<path d="M1 2h22v13H1z" fill="none" stroke="#fff"/><path d="M3 5h18M3 8h18M6 12h12" stroke="#fff" stroke-dasharray="1.500 1"/>',24,17]];
let t='';tr.forEach(([w,p,a,b])=>t+=`<div class="tr" style="width:${w}px"><svg width="${a}" height="${b}" viewBox="0 0 ${a} ${b}">${p}</svg></div>`);
this.attachShadow({mode:'open'}).innerHTML=`<style>:host{display:flex;flex:none;height:40px;background:#050e14;color:#ddd;font:12px "Noto Sans CJK SC",sans-serif;white-space:nowrap}
.st{width:48px;background:#000;display:flex;align-items:center;justify-content:center}.se{width:344px;background:#333;display:flex;align-items:center;box-sizing:border-box;padding-left:9px;color:#999;font-size:13px}.ci{width:20px;height:20px;border:3px solid #ddd;border-radius:50%;box-sizing:border-box;margin-right:7px;flex:none}.mi{margin-left:auto;margin-right:12px}
.ap{display:flex;align-items:center;justify-content:center;flex:none;box-sizing:border-box}.ac{background:#333f47;border-bottom:2px solid #6fb1e8}.u{border-bottom:2px solid #6fb1e8}.u:not(.ac){border-image:linear-gradient(90deg,transparent 3px,#6fb1e8 3px,#6fb1e8 calc(100% - 3px),transparent calc(100% - 3px)) 1}
.lk{width:54px;display:flex;align-items:center;justify-content:center;color:#bbb}.cp{width:62px;display:flex;flex-direction:column;align-items:center;justify-content:center;line-height:17px}.gp{width:5px}
.tr{display:flex;align-items:center;justify-content:center;flex:none}.zh{width:21px;display:flex;align-items:center;justify-content:center;font-size:13px;color:#fff}
.ck{width:72px;display:flex;flex-direction:column;align-items:center;justify-content:center;line-height:17px;color:#eee}.nt{width:40px;display:flex;align-items:center;justify-content:center}</style>
<div class="st"><svg width="16" height="16" viewBox="0 0 16 16"><path d="M0 2.500L6.500 1.500V7.500H0zM7.500 1.300L16 0V7.500H7.500zM0 8.500H6.500V14.500L0 13.500zM7.500 8.500H16V16L7.500 14.700z" fill="#fff"/></svg></div>
<div class="se"><span class="ci"></span>在这里输入你要搜索的内容<svg class="mi" width="12" height="18" viewBox="0 0 12 18"><rect x="3.500" y="1" width="5" height="10" rx="2.500" fill="none" stroke="#999"/><path d="M1 8c0 6 10 6 10 0M6 12v4M3 16.500h6" fill="none" stroke="#999"/></svg></div>
${apps}<div class="lk">链接</div><div class="cp"><span>21%</span><span>CPU使用</span></div><div class="gp"></div>
${t}<div class="zh">中</div><div class="tr" style="width:36px"><svg width="16" height="18" viewBox="0 0 16 18"><rect width="15" height="17" x=".5" y=".5" rx="3" fill="#f04a20" transform="rotate(-6 8 9)"/><path d="M12 5H6Q4 5 4 7t2 2h4q2 0 2 2t-2 2H4" fill="none" stroke="#fff" stroke-width="2"/></svg></div>
<div class="ck"><span>10:31</span><span>2018/7/20</span></div><div class="nt"><svg width="16" height="18" viewBox="0 0 16 18"><path d="M1 1h14v12H10l-2 3-2-3H1z" fill="none" stroke="#fff" stroke-width="1.300"/></svg></div>`}}
customElements.define('gg-taskbar',GgTaskbar);
class GgAnnot extends HTMLElement{connectedCallback(){this.attachShadow({mode:'open'}).innerHTML=`<style>:host{position:absolute;left:768px;top:126px;width:108px;height:90px;pointer-events:none}svg{display:block}</style><svg width="108" height="90"><ellipse cx="53.500" cy="45" rx="52" ry="43.500" fill="none" stroke="#f00" stroke-width="3"/></svg>`}}
customElements.define('gg-annot',GgAnnot);
class GgIme extends HTMLElement{connectedCallback(){this.attachShadow({mode:'open'}).innerHTML=`<style>:host{position:absolute;left:969px;top:0;width:206px;height:33px;display:block}svg{display:block}.p{position:absolute;left:28px;top:3px;width:178px;height:24px;box-sizing:border-box;background:#fff;border:1px solid #b9cfe4;display:flex;align-items:center;color:#1f7fd6;font:bold 15px "Noto Sans CJK SC",sans-serif}.p span{margin-left:4px}.p svg{flex:none}</style>
<div style="position:absolute;left:5px;top:0;width:41px;height:4px;background:#3fa83a"></div>
<svg style="position:absolute;left:0;top:4px" width="28" height="26" viewBox="0 0 28 26"><rect x="1" y="1" width="26" height="24" rx="5" fill="#f0501e" transform="rotate(-6 14 13)"/><path d="M21 7H10Q7 7 7 10t3 3h7q4 0 3 3t-3 3H6" fill="none" stroke="#fff" stroke-width="3.600"/></svg>
<div class="p"><span>中</span><svg style="margin-left:6px" width="14" height="14" viewBox="0 0 14 14"><circle cx="3" cy="4" r="1.500" fill="none" stroke="#1f7fd6"/><path d="M10 4a2 2 0 0 1 2 2c0 2-1 3-2.500 4" stroke="#1f7fd6" stroke-width="1.600" fill="none"/></svg><svg style="margin-left:8px" width="16" height="16" viewBox="0 0 16 16"><circle cx="8" cy="8" r="7" fill="none" stroke="#1f7fd6" stroke-width="1.300"/><path d="M5.500 5v2M10.500 5v2M4.500 10q3.500 3 7 0" stroke="#1f7fd6" fill="none"/></svg><svg style="margin-left:7px" width="14" height="17" viewBox="0 0 14 17"><rect x="4" y="0" width="6" height="11" rx="3" fill="#1f7fd6"/><path d="M1 7c0 7 12 7 12 0M7 12v4" fill="none" stroke="#1f7fd6" stroke-width="1.300"/></svg><svg style="margin-left:6.500px" width="17" height="14" viewBox="0 0 17 14"><rect width="17" height="13" rx="1.500" fill="#1f7fd6"/><path d="M2 3h13M2 6h13M4 10h9" stroke="#fff" stroke-dasharray="2 1"/></svg><svg style="margin-left:6px" width="17" height="16" viewBox="0 0 17 16"><circle cx="7" cy="4" r="3" fill="#bbb"/><path d="M1 13c0-5 4-5 6-5s5 0 5 5z" fill="#bbb"/><rect x="9" y="9" width="8" height="6" fill="#fff" stroke="#bbb"/></svg><svg style="margin-left:4.500px" width="16" height="15" viewBox="0 0 16 15"><path d="M1 3l4-2 3 1 3-1 4 2-2 4-2-1v8H5V6L3 7z" fill="#1f7fd6"/></svg><svg style="margin-left:5.500px" width="15" height="15" viewBox="0 0 15 15"><path d="M14 4a4 4 0 0 1-5 4L3 14l-2-2 6-6a4 4 0 0 1 4-5L9 3l1 2 2 1z" fill="#1f7fd6"/></svg></div>`}}
customElements.define('gg-ime',GgIme);
</script>
</body></html>
